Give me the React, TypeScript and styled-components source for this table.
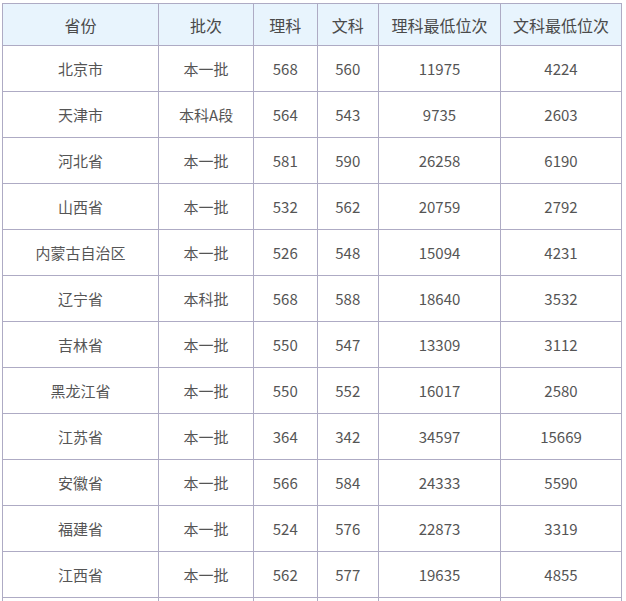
import React from "react";
import styled, { createGlobalStyle } from "styled-components";

const GlobalStyle = createGlobalStyle`
  html, body {
    margin: 0;
    padding: 0;
    background: #ffffff;
  }
  body {
    font-family: "Noto Sans CJK SC", "Noto Sans", sans-serif;
    color: #555555;
  }
`;

const Page = styled.div`
  padding: 3px 0 0 2px;
  height: 601px;
  overflow: hidden;
`;

const ScoreTable = styled.table`
  border-collapse: collapse;
  table-layout: fixed;
  width: 620px;
`;

const Col = styled.col<{ $w: number }>`
  width: ${(p) => p.$w}px;
`;

const HeadCell = styled.th`
  height: 41px;
  padding: 0;
  border: 1px solid #aeabc4;
  background: #e8f4fd;
  font-size: 16px;
  font-weight: normal;
  color: #4a4a4a;
  text-align: center;
`;

const Cell = styled.td`
  height: 45px;
  padding: 0;
  border: 1px solid #aeabc4;
  font-size: 15px;
  color: #555555;
  text-align: center;
`;

const columns: [string, number][] = [
  ["省份", 155],
  ["批次", 94],
  ["理科", 63],
  ["文科", 61],
  ["理科最低位次", 121],
  ["文科最低位次", 120],
];

const rows: string[][] = [
  ["北京市", "本一批", "568", "560", "11975", "4224"],
  ["天津市", "本科A段", "564", "543", "9735", "2603"],
  ["河北省", "本一批", "581", "590", "26258", "6190"],
  ["山西省", "本一批", "532", "562", "20759", "2792"],
  ["内蒙古自治区", "本一批", "526", "548", "15094", "4231"],
  ["辽宁省", "本科批", "568", "588", "18640", "3532"],
  ["吉林省", "本一批", "550", "547", "13309", "3112"],
  ["黑龙江省", "本一批", "550", "552", "16017", "2580"],
  ["江苏省", "本一批", "364", "342", "34597", "15669"],
  ["安徽省", "本一批", "566", "584", "24333", "5590"],
  ["福建省", "本一批", "524", "576", "22873", "3319"],
  ["江西省", "本一批", "562", "577", "19635", "4855"],
];

export default function App() {
  return (
    <Page>
      <GlobalStyle />
      <ScoreTable>
        <colgroup>
          {columns.map(([label, w]) => (
            <Col key={label} $w={w} />
          ))}
        </colgroup>
        <thead>
          <tr>
            {columns.map(([label]) => (
              <HeadCell key={label}>{label}</HeadCell>
            ))}
          </tr>
        </thead>
        <tbody>
          {rows.map((r) => (
            <tr key={r[0]}>
              {r.map((v, i) => (
                <Cell key={i}>{v}</Cell>
              ))}
            </tr>
          ))}
          {/* next row continues below the visible area */}
          <tr>
            {columns.map(([label]) => (
              <Cell key={label} />
            ))}
          </tr>
        </tbody>
      </ScoreTable>
    </Page>
  );
}
